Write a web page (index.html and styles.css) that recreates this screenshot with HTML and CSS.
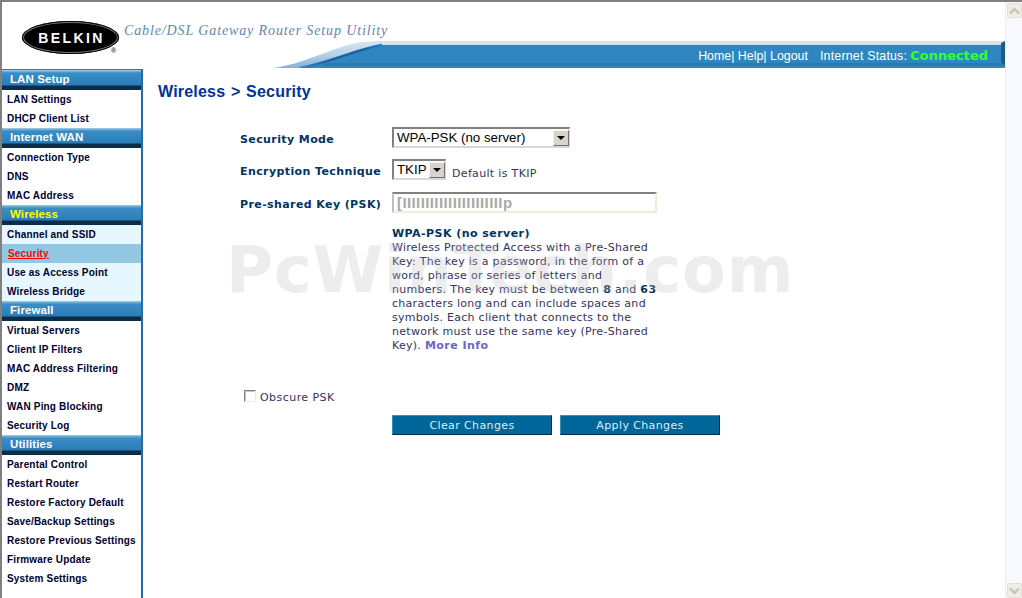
FILE: index.html
```html
<!DOCTYPE html>
<html lang="en">
<head>
  <meta charset="UTF-8">
  <title>Wireless Security</title>
  <link rel="stylesheet" href="styles.css">
</head>
<body>
  <div class="frame">
    <div class="page">

      <header class="top">
        <svg class="swoosh" width="1003" height="66" viewBox="0 0 1003 66">
          <defs>
            <linearGradient id="barfill" x1="0" y1="0" x2="0" y2="1">
              <stop offset="0" stop-color="#d6e6f2"/>
              <stop offset="0.5" stop-color="#b4d2e8"/>
              <stop offset="1" stop-color="#7fb3da"/>
            </linearGradient>
            <linearGradient id="edgefill" gradientUnits="userSpaceOnUse" x1="298" y1="0" x2="385" y2="0">
              <stop offset="0" stop-color="#2f87c2"/>
              <stop offset="0.35" stop-color="#1d5f9e"/>
              <stop offset="0.7" stop-color="#1d5f9e"/>
              <stop offset="1" stop-color="#2f87c2"/>
            </linearGradient>
          </defs>
          <path d="M272 66 C300 62 325 48 350 42 C362 39 375 39 385 39 L1003 39 L1003 66 Z" fill="url(#barfill)"/>
          <path d="M298 66 C330 60 352 48 380 43 L1003 43 L1003 66 Z" fill="#2f87c2"/>
          <rect x="322" y="61" width="681" height="3" fill="#2c78b0"/>
          <path d="M298 66 C330 60 352 48 380 43" fill="none" stroke="url(#edgefill)" stroke-width="2.5"/>
          <path d="M999 41 L1003 39 L1003 63 L999 60 Z" fill="#1d5a88"/>
        </svg>
        <div class="logo">
          <span class="logo-word">BELKIN</span>
          <span class="logo-reg">®</span>
        </div>
        <div class="tagline">Cable/DSL Gateway Router Setup Utility</div>
        <div class="status-bar">
          <span class="links">Home| Help| Logout</span>
          <span class="status">Internet Status:</span>
          <span class="connected">Connected</span>
        </div>
      </header>

      <div class="content">
        <nav class="side">
          <h3>LAN Setup</h3>
          <a href="#">LAN Settings</a>
          <a href="#">DHCP Client List</a>

          <h3>Internet WAN</h3>
          <a href="#">Connection Type</a>
          <a href="#">DNS</a>
          <a href="#">MAC Address</a>

          <h3 class="current">Wireless</h3>
          <div class="group-on">
            <a href="#">Channel and SSID</a>
            <a href="#" class="selected">Security</a>
            <a href="#">Use as Access Point</a>
            <a href="#">Wireless Bridge</a>
          </div>

          <h3>Firewall</h3>
          <a href="#">Virtual Servers</a>
          <a href="#">Client IP Filters</a>
          <a href="#">MAC Address Filtering</a>
          <a href="#">DMZ</a>
          <a href="#">WAN Ping Blocking</a>
          <a href="#">Security Log</a>

          <h3>Utilities</h3>
          <a href="#">Parental Control</a>
          <a href="#">Restart Router</a>
          <a href="#">Restore Factory Default</a>
          <a href="#">Save/Backup Settings</a>
          <a href="#">Restore Previous Settings</a>
          <a href="#">Firmware Update</a>
          <a href="#">System Settings</a>
        </nav>

        <main class="main">
          <h1>Wireless &gt; Security</h1>

          <div class="form">
            <div class="row row-mode">
              <label>Security Mode</label>
              <div class="select select-mode">
                <span>WPA-PSK (no server)</span>
                <i class="arrow"></i>
              </div>
            </div>
            <div class="row row-enc">
              <label>Encryption Technique</label>
              <div class="select select-enc">
                <span>TKIP</span>
                <i class="arrow"></i>
              </div>
              <span class="hint">Default is TKIP</span>
            </div>
            <div class="row row-key">
              <label>Pre-shared Key (PSK)</label>
              <div class="psk"><span>[IIIIIIIIIIIIIIIIIIIIIIp</span></div>
            </div>

            <div class="desc">
              <b class="desc-title">WPA-PSK (no server)</b><br>
              Wireless Protected Access with a Pre-Shared<br>
              Key: The key is a password, in the form of a<br>
              word, phrase or series of letters and<br>
              numbers. The key must be between <b>8</b> and <b>63</b><br>
              characters long and can include spaces and<br>
              symbols. Each client that connects to the<br>
              network must use the same key (Pre-Shared<br>
              Key). <a href="#" class="more">More Info</a>
            </div>

            <div class="obscure">
              <i class="check"></i>
              <span>Obscure PSK</span>
            </div>

            <div class="buttons">
              <button>Clear Changes</button>
              <button>Apply Changes</button>
            </div>
          </div>

          <div class="watermark">PcWinTech.com</div>
        </main>
      </div>
    </div>

    <div class="scroll">
      <div class="scroll-btn"><svg width="11" height="8" viewBox="0 0 11 8"><path d="M1 6.5 L5.5 2 L10 6.5" fill="none" stroke="#c9c8ba" stroke-width="2.6"/></svg></div>
      <div class="scroll-btn"><svg width="11" height="8" viewBox="0 0 11 8"><path d="M1 1.5 L5.5 6 L10 1.5" fill="none" stroke="#c9c8ba" stroke-width="2.6"/></svg></div>
    </div>
  </div>
</body>
</html>
```

FILE: styles.css
```css
* {
  margin: 0;
  padding: 0;
  box-sizing: border-box;
}

body {
  width: 1022px;
  height: 598px;
  overflow: hidden;
  background-color: #fff;
  font-family: 'DejaVu Sans', Verdana, sans-serif;
}

.frame {
  display: flex;
  height: 598px;
  border-top: 2px solid #808080;
  border-left: 2px solid #808080;
}

.page {
  flex: 1;
  display: flex;
  flex-direction: column;
  min-width: 0;
}

/* header */
.top {
  position: relative;
  flex: none;
  height: 66px;
  overflow: hidden;
}

.swoosh {
  position: absolute;
  left: 0;
  top: 0;
}

.logo {
  position: absolute;
  left: 20px;
  top: 19px;
  width: 97px;
  height: 33px;
  border-radius: 50%;
  background-color: #000;
  box-shadow: inset 0 0 0 1px #000, inset 0 0 0 2px #777;
  display: flex;
  align-items: center;
  justify-content: center;
}

.logo-word {
  color: #fff;
  font: bold 14px 'Liberation Sans', sans-serif;
  letter-spacing: 2.4px;
  padding-left: 2px;
}

.logo-reg {
  position: absolute;
  left: 89px;
  top: 26px;
  font: bold 7px 'Liberation Sans', sans-serif;
  color: #333;
}

.tagline {
  position: absolute;
  left: 122px;
  top: 21px;
  font: italic 14px 'Liberation Serif', serif;
  letter-spacing: 0.88px;
  color: #5f88b0;
}

.status-bar {
  position: absolute;
  right: 17px;
  top: 46px;
  display: flex;
  align-items: baseline;
  color: #fff;
  font: 12.4px 'Liberation Sans', sans-serif;
}

.links {
  margin-right: 12px;
}

.status {
  letter-spacing: 0.2px;
}

.connected {
  margin-left: 3px;
  color: #33ff33;
  font: bold 13px 'DejaVu Sans', sans-serif;
}

/* body of the page */
.content {
  flex: 1;
  display: flex;
  min-height: 0;
  margin-top: 1px;
}

.side {
  flex: none;
  width: 141px;
  border-right: 2px solid #1f6ea6;
  border-top: 1px solid #2a7db8;
}

.side h3 {
  position: relative;
  height: 20px;
  padding: 2px 0 0 8px;
  color: #fff;
  font: bold 11.5px/14px 'Liberation Sans', sans-serif;
  letter-spacing: 0.1px;
  background: linear-gradient(#a6cce6 0, #3a8ec6 3px, #2a7db8 15px, #0c2d48 16px, #0c2d48 20px);
}

.side h3.current {
  color: #ffff00;
}

.side a {
  display: block;
  height: 19px;
  padding-left: 5px;
  color: #000033;
  font: bold 10px/20px 'Liberation Sans', sans-serif;
  letter-spacing: 0.17px;
  text-decoration: none;
}

.group-on {
  background-color: #e6f7ff;
}

.side a.selected {
  background-color: #93c8e4;
  color: #ff0000;
  text-decoration: underline;
  padding-left: 6px;
}

.main {
  position: relative;
  flex: 1;
  padding: 13px 0 0 15px;
}

.main h1 {
  color: #003399;
  font: bold 16px/20px 'Liberation Sans', sans-serif;
  letter-spacing: 0.2px;
  word-spacing: 1px;
}

.form {
  margin: 25px 0 0 82px;
}

.row {
  display: flex;
  align-items: center;
}

.row label {
  flex: none;
  width: 152px;
  padding-top: 4px;
  color: #003366;
  font-size: 11px;
  font-weight: bold;
  letter-spacing: 0.4px;
}

.row-mode {
  height: 21px;
}

.row-enc {
  height: 21px;
  margin-top: 11px;
}

.row-key {
  height: 21px;
  margin-top: 12px;
}

.select {
  display: flex;
  align-items: center;
  justify-content: space-between;
  height: 21px;
  padding-left: 3px;
  border: 2px solid;
  border-color: #808080 #d8d8d0 #d8d8d0 #808080;
  border-right-width: 1px;
  background-color: #fff;
  color: #000;
  font: 13.3px 'Liberation Sans', sans-serif;
}

.select-mode {
  width: 178px;
}

.select-enc {
  width: 54px;
}

.arrow {
  position: relative;
  display: block;
  width: 16px;
  height: 16px;
  background-color: #d8d4cc;
  border: 1px solid;
  border-color: #f4f4f0 #707070 #707070 #f4f4f0;
}

.arrow::after {
  content: "";
  position: absolute;
  left: 3px;
  top: 5px;
  border: 4px solid transparent;
  border-top: 4px solid #000;
  border-bottom: 0;
}

.hint {
  margin-left: 6px;
  padding-top: 7px;
  color: #333366;
  font-size: 11px;
  letter-spacing: 0.33px;
}

.psk {
  width: 265px;
  height: 21px;
  padding-left: 3px;
  border: 2px solid;
  border-color: #808080 #eeeedd #eeeedd #c0c0c0;
  overflow: hidden;
  color: #aaa;
  font: bold 15px/18px 'Liberation Sans', sans-serif;
  letter-spacing: 0.4px;
}

.desc {
  margin: 14px 0 0 152px;
  color: #333366;
  font-size: 11px;
  line-height: 14px;
  letter-spacing: 0.28px;
}

.desc-title, .desc b {
  color: #003366;
  letter-spacing: 0.45px;
}

.desc .more {
  color: #6666cc;
  font-weight: bold;
  letter-spacing: 0.45px;
  text-decoration: none;
}

.obscure {
  display: flex;
  align-items: center;
  margin: 38px 0 0 4px;
  color: #333366;
  font-size: 11px;
  letter-spacing: 0.45px;
}

.check {
  width: 12px;
  height: 12px;
  margin-right: 4px;
  margin-top: -3px;
  border: 1px solid;
  border-color: #808080 #eeeedd #eeeedd #808080;
  box-shadow: inset 1px 1px 0 #c8c8c0;
}

.buttons {
  display: flex;
  gap: 8px;
  margin: 11px 0 0 152px;
}

.buttons button {
  width: 160px;
  height: 20px;
  background-color: #006699;
  border: 1px solid;
  border-color: #3f8fb8 #0a2a40 #0a2a40 #3f8fb8;
  color: #d8eef8;
  font: 11px 'DejaVu Sans', sans-serif;
  letter-spacing: 0.38px;
}

.watermark {
  position: absolute;
  left: 83px;
  top: 163px;
  color: rgba(190, 190, 190, 0.28);
  font: bold 64px/76px 'DejaVu Sans', sans-serif;
  letter-spacing: 0.8px;
  white-space: nowrap;
  pointer-events: none;
}

/* scrollbar */
.scroll {
  flex: none;
  width: 17px;
  display: flex;
  flex-direction: column;
  justify-content: space-between;
  padding: 1px 1px 0 1px;
  background-color: #f8f8ff;
  border-left: 1px solid #eeeeee;
}

.scroll-btn {
  width: 15px;
  height: 15px;
  display: flex;
  align-items: center;
  justify-content: center;
  background-color: #efeee6;
  border: 1px solid #e2e1d6;
  border-radius: 2px;
}
```
